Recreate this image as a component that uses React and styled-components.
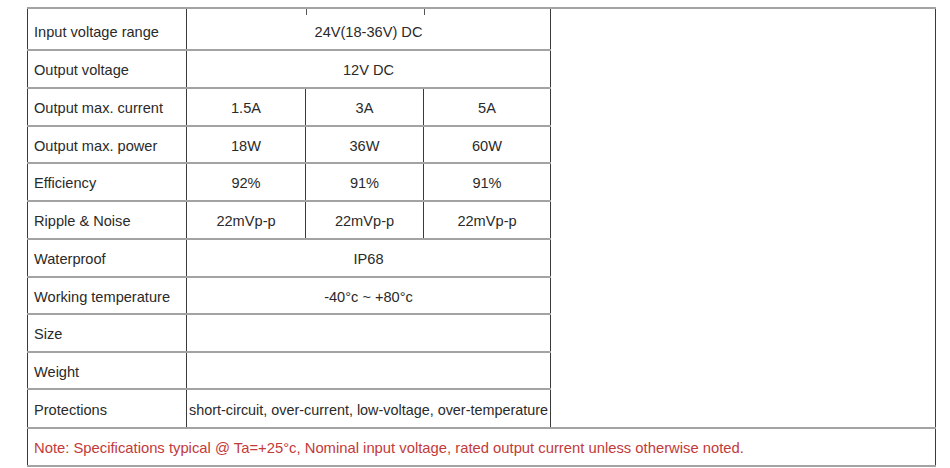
import React from "react";
import styled, { createGlobalStyle } from "styled-components";

const Global = createGlobalStyle`
  html, body { margin: 0; padding: 0; background: #ffffff; }
  body { font-family: "Liberation Sans", Arial, sans-serif; }
`;

const Page = styled.div`
  padding: 7px 0 0 27px;
`;

const Table = styled.table`
  border-collapse: collapse;
  table-layout: fixed;
  width: 908px;
  font-size: 14.6px;
  color: #2a2a2a;
`;

const Row = styled.tr`
  height: ${(p) => p.$h || 38}px;
`;

const Cell = styled.td`
  position: relative;
  padding: 0 ${(p) => (p.$left ? "6px" : "0")};
  padding-top: ${(p) => (p.$dy !== undefined ? p.$dy : 2)}px;
  text-align: ${(p) => (p.$left ? "left" : "center")};
  vertical-align: middle;
  white-space: nowrap;
  overflow: visible;
  border-top: 2px solid #a3a3a3;
  border-bottom: 2px solid #a3a3a3;
  border-left: 1px solid #3a3a3a;
  border-right: 1px solid #3a3a3a;
  color: ${(p) => (p.$note ? "#c23a3a" : "#2a2a2a")};
  font-size: ${(p) => (p.$fs ? `${p.$fs}px` : "inherit")};
`;

const TickedCell = styled(Cell)`
  &::before,
  &::after {
    content: "";
    position: absolute;
    top: 0;
    width: 1px;
    height: 6px;
    background: #555555;
  }
  &::before { left: 119px; }
  &::after { left: 237px; }
`;

const rows3 = [
  ["Output max. current", "1.5A", "3A", "5A", 38],
  ["Output max. power", "18W", "36W", "60W", 37],
  ["Efficiency", "92%", "91%", "91%", 38],
  ["Ripple & Noise", "22mVp-p", "22mVp-p", "22mVp-p", 38],
];

const merged = [
  ["Waterproof", "IP68", 38],
  ["Working temperature", "-40°c ~ +80°c", 37],
  ["Size", "", 38],
  ["Weight", "", 37],
  ["Protections", "short-circuit, over-current, low-voltage, over-temperature", 39, 14.4],
];

export default function App() {
  return (
    <>
      <Global />
      <Page>
        <Table>
          <colgroup>
            <col style={{ width: 159 }} />
            <col style={{ width: 119 }} />
            <col style={{ width: 118 }} />
            <col style={{ width: 127 }} />
            <col style={{ width: 385 }} />
          </colgroup>
          <tbody>
            <Row $h={42}>
              <Cell $left $dy={5}>Input voltage range</Cell>
              <TickedCell colSpan={3} $dy={5}>24V(18-36V) DC</TickedCell>
              <Cell rowSpan={11} />
            </Row>
            <Row $h={38}>
              <Cell $left>Output voltage</Cell>
              <Cell colSpan={3}>12V DC</Cell>
            </Row>
            {rows3.map((r) => (
              <Row key={r[0]} $h={r[4]}>
                <Cell $left>{r[0]}</Cell>
                <Cell>{r[1]}</Cell>
                <Cell>{r[2]}</Cell>
                <Cell>{r[3]}</Cell>
              </Row>
            ))}
            {merged.map((r) => (
              <Row key={r[0]} $h={r[2]}>
                <Cell $left>{r[0]}</Cell>
                <Cell colSpan={3} $fs={r[3]}>{r[1]}</Cell>
              </Row>
            ))}
            <Row $h={38}>
              <Cell $left $note $fs={14.8} colSpan={5}>
                Note: Specifications typical @ Ta=+25°c, Nominal input voltage, rated output current unless otherwise noted.
              </Cell>
            </Row>
          </tbody>
        </Table>
      </Page>
    </>
  );
}
